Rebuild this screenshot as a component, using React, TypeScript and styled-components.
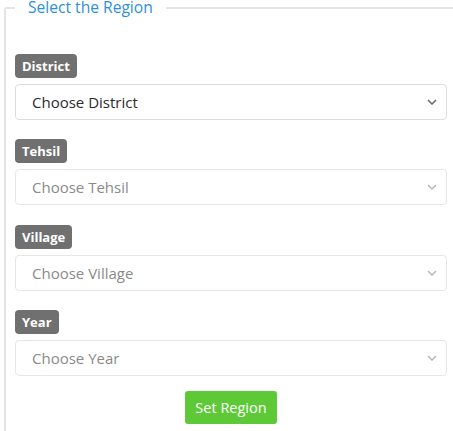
import React from 'react';
import styled, { createGlobalStyle } from 'styled-components';

const GlobalStyle = createGlobalStyle`
  html, body {
    margin: 0;
    padding: 0;
    overflow: hidden;
    background: #fff;
  }
  body {
    font-family: "Open Sans", "Noto Sans", sans-serif;
  }
`;

const Fieldset = styled.fieldset`
  box-sizing: border-box;
  width: 454px;
  min-height: 460px;
  margin: 0 0 0 4px;
  padding: 0 9px 20px 9px;
  border: 2px solid #e4e4e4;
  border-radius: 2px;
`;

const Legend = styled.legend`
  padding: 0 13px;
  font-size: 15.6px;
  line-height: 15px;
  color: #2d8fd8;
`;

const Form = styled.div`
  display: flex;
  flex-direction: column;
  padding-top: 39px;
`;

const Group = styled.div`
  display: flex;
  flex-direction: column;
  align-items: flex-start;
  gap: 6px;
  margin-bottom: 19.4px;
`;

const Badge = styled.span`
  display: inline-flex;
  align-items: center;
  height: 24px;
  padding: 0 7px;
  border-radius: 4px;
  background: #707070;
  color: #fff;
  font-size: 13px;
  font-weight: 700;
`;

const SelectWrap = styled.div`
  position: relative;
  width: 100%;
`;

const Select = styled.select<{ $muted?: boolean }>`
  appearance: none;
  box-sizing: border-box;
  width: 100%;
  height: 36px;
  padding: 0 30px 0 16px;
  border: 1px solid ${p => (p.$muted ? '#e6e6e6' : '#dcdcdc')};
  border-radius: 4px;
  background: #fff;
  font-family: inherit;
  font-size: 15px;
  color: ${p => (p.$muted ? '#8a8a8a' : '#2b2b2b')};
  opacity: 1;
  outline: none;
`;

const Chevron = styled.svg<{ $muted?: boolean }>`
  position: absolute;
  right: 10px;
  top: 50%;
  transform: translateY(-50%);
  width: 10px;
  height: 6px;
  stroke: ${p => (p.$muted ? '#b8b8b8' : '#666')};
  pointer-events: none;
`;

const Actions = styled.div`
  display: flex;
  justify-content: center;
  margin-top: -5px;
`;

const Button = styled.button`
  height: 33px;
  padding: 0 10px;
  border: none;
  border-radius: 3px;
  background: #5ec937;
  color: #fff;
  font-family: inherit;
  font-size: 14.5px;
`;

const fields = [
  { label: 'District', placeholder: 'Choose District', disabled: false },
  { label: 'Tehsil', placeholder: 'Choose Tehsil', disabled: true },
  { label: 'Village', placeholder: 'Choose Village', disabled: true },
  { label: 'Year', placeholder: 'Choose Year', disabled: true },
];

const App = () => (
  <>
    <GlobalStyle />
    <Fieldset>
      <Legend>Select the Region</Legend>
      <Form>
        {fields.map(f => (
          <Group key={f.label}>
            <Badge>{f.label}</Badge>
            <SelectWrap>
              <Select $muted={f.disabled} disabled={f.disabled} defaultValue="">
                <option value="">{f.placeholder}</option>
              </Select>
              <Chevron $muted={f.disabled} viewBox="0 0 10 6" fill="none" strokeWidth="1.5">
                <path d="M1 1l4 4 4-4" />
              </Chevron>
            </SelectWrap>
          </Group>
        ))}
        <Actions>
          <Button>Set Region</Button>
        </Actions>
      </Form>
    </Fieldset>
  </>
);

export default App;
